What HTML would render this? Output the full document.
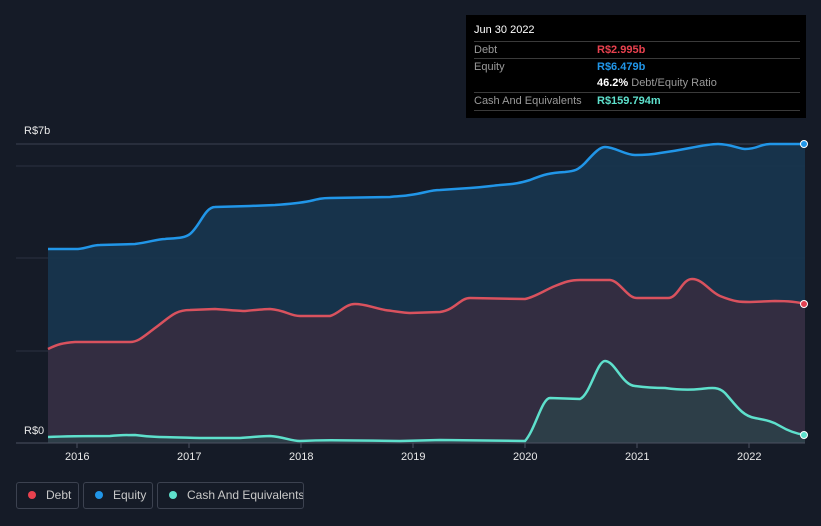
<!DOCTYPE html>
<html><head><meta charset="utf-8"><style>
body{margin:0;width:821px;height:526px;background:#151b27;font-family:"Liberation Sans",sans-serif;overflow:hidden;position:relative}
.tip{position:absolute;left:466px;top:15px;width:340px;height:103px;background:#000;color:#fff;font-size:11px}
.row{position:absolute;left:8px;width:326px;border-top:1px solid #3a3a3a;height:17px;line-height:17px;color:#9a9a9a}
.v{position:absolute;left:123px;font-weight:bold}
.leg{position:absolute;top:482px;height:27px;border:1px solid #3c4250;border-radius:3px;color:#c8c8c8;font-size:12px;line-height:25px;box-sizing:border-box;white-space:nowrap;overflow:hidden}
.dot{display:inline-block;width:8px;height:8px;border-radius:50%;margin:0 10px 0 11px}
.ax{position:absolute;color:#e8e8e8;font-size:11px}
</style></head><body>
<svg width="821" height="526" style="position:absolute;left:0;top:0">
<g stroke="#2a3140" stroke-width="1"><line x1="16" y1="166" x2="805" y2="166"/><line x1="16" y1="258" x2="805" y2="258"/><line x1="16" y1="351" x2="805" y2="351"/></g>
<line x1="16" y1="144" x2="805" y2="144" stroke="#3a4150"/>
<path d="M48 249 L78 249 C88 248 92 245 100 245 L135 244 C150 242 158 239 165 239 C178 238 185 238 190 234 C200 226 205 207 215 207 L250 206 L275 205 C290 204 300 203 310 201 C318 199 322 198 330 198 L390 197 C400 196 405 196 410 195 C425 193 430 190 440 190 L470 188 C485 187 490 186 500 185 C515 184 520 183 530 180 C545 174 550 173 565 172 C575 171 578 170 585 163 C595 152 600 147 605 147 C615 147 625 155 635 155 C650 155 655 154 660 153 C675 151 685 149 690 148 C700 146 710 144 718 144 C730 144 740 149 745 149 C758 149 760 144 770 144 L805 144 L805 443 L48 443Z" fill="#173650" fill-opacity="0.9"/>
<path d="M48 349 C58 344 63 343 75 342 L130 342 C138 342 143 337 155 328 C170 317 175 310 190 310 L215 309 C230 310 240 311 245 311 C255 310 265 309 270 309 C285 310 290 316 300 316 L330 316 C340 313 345 304 355 304 C365 304 370 307 385 310 C400 312 405 313 410 313 L440 312 C455 310 460 298 470 298 L525 299 C535 297 545 290 555 286 C565 282 570 280 580 280 L610 280 C620 281 627 298 637 298 L668 298 C678 298 682 279 692 279 C703 279 710 292 720 296 C735 302 740 302 750 302 L775 301 C790 301 798 302 805 304 L805 443 L48 443Z" fill="#352d40" fill-opacity="0.95"/>
<path d="M48 437 C70 436 80 436 110 436 C120 435 125 435 135 435 C150 437 160 437 200 438 L240 438 C255 437 262 436 270 436 C285 437 290 441 300 441 C320 440 330 440 400 441 L440 440 L525 441 C535 430 542 398 550 398 L580 399 C590 395 597 361 605 361 C615 361 622 385 635 386 C650 388 660 388 665 388 C680 390 690 390 700 389 C710 388 718 386 725 393 C735 404 742 416 755 418 C765 420 772 421 780 426 C790 432 798 434 805 435 L805 443 L48 443Z" fill="#2a4a4c" fill-opacity="0.6"/>
<path d="M48 249 L78 249 C88 248 92 245 100 245 L135 244 C150 242 158 239 165 239 C178 238 185 238 190 234 C200 226 205 207 215 207 L250 206 L275 205 C290 204 300 203 310 201 C318 199 322 198 330 198 L390 197 C400 196 405 196 410 195 C425 193 430 190 440 190 L470 188 C485 187 490 186 500 185 C515 184 520 183 530 180 C545 174 550 173 565 172 C575 171 578 170 585 163 C595 152 600 147 605 147 C615 147 625 155 635 155 C650 155 655 154 660 153 C675 151 685 149 690 148 C700 146 710 144 718 144 C730 144 740 149 745 149 C758 149 760 144 770 144 L805 144" fill="none" stroke="#2196e8" stroke-width="2.5"/>
<path d="M48 349 C58 344 63 343 75 342 L130 342 C138 342 143 337 155 328 C170 317 175 310 190 310 L215 309 C230 310 240 311 245 311 C255 310 265 309 270 309 C285 310 290 316 300 316 L330 316 C340 313 345 304 355 304 C365 304 370 307 385 310 C400 312 405 313 410 313 L440 312 C455 310 460 298 470 298 L525 299 C535 297 545 290 555 286 C565 282 570 280 580 280 L610 280 C620 281 627 298 637 298 L668 298 C678 298 682 279 692 279 C703 279 710 292 720 296 C735 302 740 302 750 302 L775 301 C790 301 798 302 805 304" fill="none" stroke="#d9525e" stroke-width="2.5"/>
<path d="M48 437 C70 436 80 436 110 436 C120 435 125 435 135 435 C150 437 160 437 200 438 L240 438 C255 437 262 436 270 436 C285 437 290 441 300 441 C320 440 330 440 400 441 L440 440 L525 441 C535 430 542 398 550 398 L580 399 C590 395 597 361 605 361 C615 361 622 385 635 386 C650 388 660 388 665 388 C680 390 690 390 700 389 C710 388 718 386 725 393 C735 404 742 416 755 418 C765 420 772 421 780 426 C790 432 798 434 805 435" fill="none" stroke="#5ee0cc" stroke-width="2.5"/>
<line x1="16" y1="443" x2="805" y2="443" stroke="#4a5060"/>
<g stroke="#4a5060"><line x1="77" y1="443" x2="77" y2="448"/><line x1="189" y1="443" x2="189" y2="448"/><line x1="301" y1="443" x2="301" y2="448"/><line x1="413" y1="443" x2="413" y2="448"/><line x1="525" y1="443" x2="525" y2="448"/><line x1="637" y1="443" x2="637" y2="448"/><line x1="749" y1="443" x2="749" y2="448"/></g>
<circle cx="804" cy="144" r="3.5" fill="#2196e8" stroke="#fff" stroke-width="1"/>
<circle cx="804" cy="304" r="3.5" fill="#e04050" stroke="#fff" stroke-width="1"/>
<circle cx="804" cy="435" r="3.5" fill="#5ee0cc" stroke="#fff" stroke-width="1"/>
<rect x="16" y="424" width="32" height="18" fill="#151b27"/>
</svg>
<div class="ax" style="left:24px;top:125px">R$7b</div>
<div class="ax" style="left:24px;top:425px">R$0</div>
<div class="ax" style="left:65px;top:451px">2016</div>
<div class="ax" style="left:177px;top:451px">2017</div>
<div class="ax" style="left:289px;top:451px">2018</div>
<div class="ax" style="left:401px;top:451px">2019</div>
<div class="ax" style="left:513px;top:451px">2020</div>
<div class="ax" style="left:625px;top:451px">2021</div>
<div class="ax" style="left:737px;top:451px">2022</div>
<div class="tip">
<div style="position:absolute;left:8px;top:9px">Jun 30 2022</div>
<div class="row" style="top:26px">Debt<span class="v" style="color:#e8414e">R$2.995b</span></div>
<div class="row" style="top:43px">Equity<span class="v" style="color:#2196e8">R$6.479b</span></div>
<div class="row" style="top:60px;border-top:none"><span class="v" style="color:#fff">46.2% <span style="font-weight:normal;color:#9a9a9a">Debt/Equity Ratio</span></span></div>
<div class="row" style="top:77px;border-bottom:1px solid #3a3a3a">Cash And Equivalents<span class="v" style="color:#5ee0cc">R$159.794m</span></div>
</div>
<div class="leg" style="left:16px;width:63px"><span class="dot" style="background:#e8414e"></span>Debt</div>
<div class="leg" style="left:83px;width:70px"><span class="dot" style="background:#2196e8"></span>Equity</div>
<div class="leg" style="left:157px;width:147px"><span class="dot" style="background:#5ee0cc"></span>Cash And Equivalents</div>
</body></html>
